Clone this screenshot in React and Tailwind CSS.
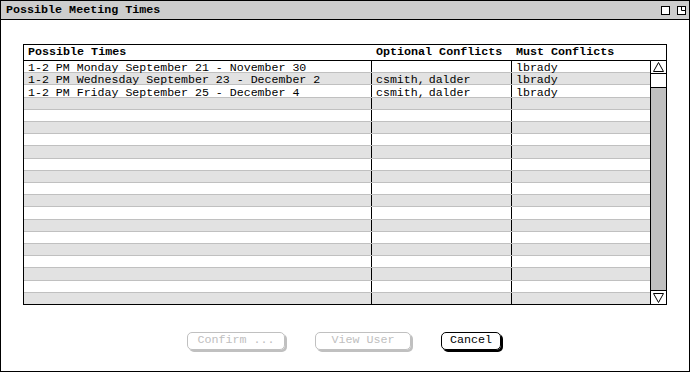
import React from "react";

const mono = { fontFamily: '"Liberation Mono", "DejaVu Sans Mono", monospace' };

const rows = [
  ["1-2 PM Monday September 21 - November 30", "", "lbrady"],
  ["1-2 PM Wednesday September 23 - December 2", "csmith, dalder", "lbrady"],
  ["1-2 PM Friday September 25 - December 4", "csmith, dalder", "lbrady"],
];
while (rows.length < 20) rows.push(["", "", ""]);

function Btn({ label, disabled, w }) {
  return (
    <div
      className={
        "h-[18px] rounded-[5px] border flex items-center justify-center text-[11.7px] leading-none " +
        (disabled
          ? "border-[#c0c0c0] text-[#c0c0c0] shadow-[2px_2px_0_#c0c0c0]"
          : "border-black text-black shadow-[2px_2px_0_#000]")
      }
      style={{ width: w }}
    >
      {label}
    </div>
  );
}

function Conf({ text }) {
  if (!text) return null;
  const [a, b] = text.split(" ");
  return (
    <span>
      {a}
      <span className="tracking-[-3px]"> </span>
      {b}
    </span>
  );
}

export default function App() {
  return (
    <div className="w-[690px] h-[372px] bg-white border border-black flex flex-col text-black" style={mono}>
      <div className="h-[19px] shrink-0 bg-[#cdcdcd] border-b border-black flex items-center pl-[5px] pr-[3px]">
        <span className="font-bold text-[11.7px] leading-none pt-[1px]">Possible Meeting Times</span>
        <div className="ml-auto flex gap-[7px] items-center">
          <svg width="9" height="9" viewBox="0 0 9 9">
            <rect x="0.5" y="0.5" width="8" height="8" fill="white" stroke="black" />
          </svg>
          <svg width="9" height="9" viewBox="0 0 9 9">
            <rect x="0.5" y="0.5" width="8" height="8" fill="white" stroke="black" />
            <path d="M4.5 0.5 V4.5 H8.5" fill="none" stroke="black" />
          </svg>
        </div>
      </div>

      <div className="mx-[22px] mt-[24px] h-[261px] border border-black flex flex-col">
        <div className="h-[16px] shrink-0 border-b border-black flex font-bold text-[11.7px] leading-[15px]">
          <div className="w-[347px] pl-[4px]">Possible Times</div>
          <div className="w-[140px] pl-[5px]">Optional Conflicts</div>
          <div className="w-[139px] pl-[5px]">Must Conflicts</div>
        </div>
        <div className="flex-1 flex min-h-0">
          <div className="w-[626px] flex flex-col">
            {rows.map((r, i) => (
              <div
                key={i}
                className={
                  "flex-1 flex text-[11.6px] leading-[9px] " +
                  (i % 2 === 1 ? "bg-[#e2e2e2] " : "bg-white ") +
                  (i < rows.length - 1 ? "border-b border-[#c0c0c0]" : "")
                }
              >
                <div className="w-[347px] pl-[4px] flex items-end whitespace-nowrap">{r[0]}</div>
                <div className="w-[140px] pl-[4px] border-l border-black flex items-end whitespace-nowrap">
                  <Conf text={r[1]} />
                </div>
                <div className="w-[139px] pl-[4px] border-l border-black flex items-end whitespace-nowrap">{r[2]}</div>
              </div>
            ))}
          </div>
          <div className="w-[16px] border-l border-black flex flex-col">
            <div className="h-[13px] border-b border-black bg-white flex items-center justify-center">
              <svg width="11" height="10" viewBox="0 0 11 10">
                <polygon points="5.5,0.5 10.5,9.5 0.5,9.5" fill="none" stroke="black" />
              </svg>
            </div>
            <div className="h-[14px] border-b border-black bg-white" />
            <div className="flex-1 bg-[#c0c0c0]" />
            <div className="h-[14px] border-t border-black bg-white flex items-center justify-center">
              <svg width="11" height="10" viewBox="0 0 11 10">
                <polygon points="0.5,0.5 10.5,0.5 5.5,9.5" fill="none" stroke="black" />
              </svg>
            </div>
          </div>
        </div>
      </div>

      <div className="mt-[27px] flex justify-center gap-[30px] pr-[2px]">
        <Btn label="Confirm ..." disabled w={98} />
        <Btn label="View User" disabled w={96} />
        <Btn label="Cancel" w={60} />
      </div>
    </div>
  );
}
